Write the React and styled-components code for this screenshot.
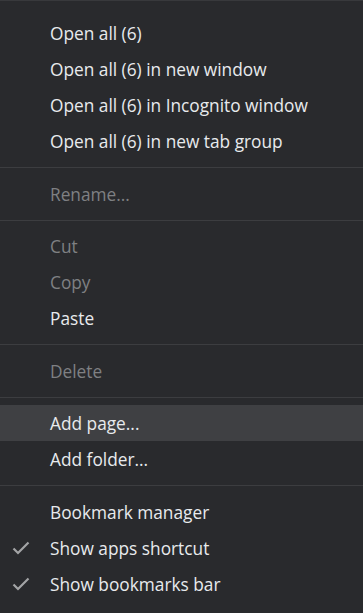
import React from 'react'
import styled, { createGlobalStyle } from 'styled-components'

const GlobalStyle = createGlobalStyle`
    html, body {
        margin: 0;
        padding: 0;
        background: #292a2d;
    }
`

const Menu = styled.div`
    box-sizing: border-box;
    width: 363px;
    height: 613px;
    padding-top: 14px;
    background: #292a2d;
    border-top: 1px solid #38393c;
    font-family: "Open Sans", "Noto Sans", sans-serif;
    font-size: 17.3px;
    overflow: hidden;
`

const Item = styled.div`
    display: flex;
    align-items: center;
    height: 36px;
    padding-left: 50px;
    padding-top: 1px;
    box-sizing: border-box;
    position: relative;
    color: ${props => props.disabled ? '#7f8083' : '#e8eaed'};
    background: ${props => props.active ? '#3f4043' : 'transparent'};
    white-space: nowrap;
`

const Check = styled.svg`
    position: absolute;
    left: 12px;
    top: 11px;
`

const Separator = styled.div`
    height: 1px;
    background: #3c3d40;
    margin: 8px 0 7.5px;
`

const CheckMark = () => (
    <Check width='18' height='14' viewBox='0 0 18 14'>
        <path d='M1.5 7.5 L6 12 L16.5 1.5' fill='none' stroke='#a3a4a6' strokeWidth='2.2' />
    </Check>
)

const groups = [
    [
        { label: 'Open all (6)' },
        { label: 'Open all (6) in new window' },
        { label: 'Open all (6) in Incognito window' },
        { label: 'Open all (6) in new tab group' }
    ],
    [{ label: 'Rename...', disabled: true }],
    [
        { label: 'Cut', disabled: true },
        { label: 'Copy', disabled: true },
        { label: 'Paste' }
    ],
    [{ label: 'Delete', disabled: true }],
    [
        { label: 'Add page...', active: true },
        { label: 'Add folder...' }
    ],
    [
        { label: 'Bookmark manager' },
        { label: 'Show apps shortcut', checked: true },
        { label: 'Show bookmarks bar', checked: true }
    ]
]

export default function App() {
    return (
        <>
            <GlobalStyle />
            <Menu>
                {groups.map((group, i) => (
                    <React.Fragment key={i}>
                        {i > 0 && <Separator />}
                        {group.map(item => (
                            <Item key={item.label} disabled={item.disabled} active={item.active}>
                                {item.checked && <CheckMark />}
                                {item.label}
                            </Item>
                        ))}
                    </React.Fragment>
                ))}
            </Menu>
        </>
    )
}
